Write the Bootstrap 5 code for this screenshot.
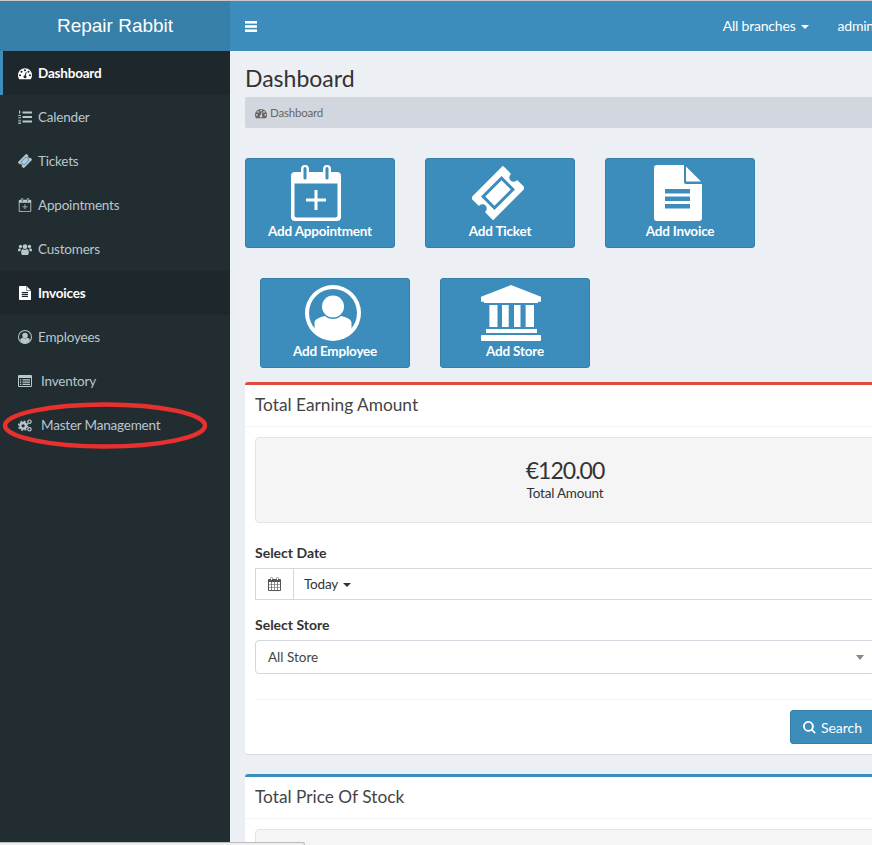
<!DOCTYPE html>
<html lang="en">
<head>
    <meta charset="UTF-8">
    <meta name="viewport" content="width=device-width, initial-scale=1.0">
    <link href="https://cdn.jsdelivr.net/npm/bootstrap@5.3.0/dist/css/bootstrap.min.css" rel="stylesheet">
    <title>Repair Rabbit Dashboard</title>
    <style>
        html, body { height: 845px; overflow: hidden; }
        body { font-family: Lato, "Liberation Sans", sans-serif; font-size: 13.5px; letter-spacing: -.2px; color: #333; background: #ecf0f5; position: relative; }
        .shell { width: 900px; height: 845px; overflow: hidden; border-top: 1px solid #c8c8c8; }
        .glyph { fill: currentColor; flex: none; display: block; }

        .topbar { height: 50px; background: #3c8dbc; color: #fff; }
        .brand-cell { width: 230px; background: #367fa9; font-family: "Liberation Sans", Arial, sans-serif; font-size: 19px; letter-spacing: 0; line-height: 50px; text-align: center; }
        .menu-bars { margin-left: 15px; }
        .top-links { gap: 29px; padding-right: 26px; padding-bottom: 2px; }
        .top-link { color: #fff; font-size: 14px; }
        .top-link:hover { color: #fff; }
        .top-link.dropdown-toggle::after { vertical-align: 2px; margin-left: 5px; border-top-width: 4px; border-right-width: 4px; border-left-width: 4px; }

        .side-menu { width: 230px; background: #222d32; }
        .side-item { height: 44px; padding: 0 5px 0 15px; border-left: 3px solid transparent; color: #b8c7ce; text-decoration: none; gap: 6px; }
        .side-item:hover { color: #b8c7ce; }
        .side-item.picked { background: #1e282c; color: #fff; font-weight: 700; }
        .side-item.marked { border-left-color: #3c8dbc; }
        .side-item.wide-gap { gap: 9px; }

        .page-pane { width: 670px; height: 794px; overflow: hidden; padding: 14px 15px 0; }
        .page-title { font-size: 23px; line-height: 26px; font-weight: 400; letter-spacing: 0; margin: 0 0 6px; }
        .crumbs { background: #d2d6de; border-radius: 2px; font-size: 11.5px; color: #666; height: 31px; padding: 0 10px; margin: 0; gap: 3px; }

        .tile-row { gap: 30px; margin-top: 30px; }
        .tile-row.shifted { padding-left: 15px; }
        .tile { width: 150px; height: 90px; background: #3c8dbc; border: 1px solid #367fa9; border-radius: 3px; color: #fff; padding-top: 6px; font-weight: 700; line-height: 20px; text-decoration: none; }
        .tile:hover { color: #fff; }
        .tile .glyph { height: 56px; }

        .stat-box { border: 0; border-top: 3px solid #3c8dbc; border-radius: 3px; box-shadow: 0 1px 1px rgba(0,0,0,.1); background: #fff; }
        .stat-box.danger { border-top-color: #dd4b39; margin-top: 14px; margin-bottom: 20px; }
        .stat-box .card-header { background: #fff; border-bottom: 1px solid #f4f4f4; padding: 9px 10px 0; height: 42px; }
        .stat-box .card-body { padding: 10px; }
        .box-title { font-size: 17.3px; line-height: 21px; font-weight: 400; letter-spacing: 0; margin: 0; color: #444; }
        .amount-well { height: 86px; padding-top: 19px; background: #f5f5f5; border: 1px solid #e3e3e3; border-radius: 4px; margin-bottom: 20px; }
        .amount-value { font-size: 23px; letter-spacing: -1px; line-height: 26px; color: #333; }
        .amount-note { line-height: 20px; }
        .field-label { font-size: 14px; letter-spacing: 0; font-weight: 700; line-height: 20px; margin-bottom: 5px; display: block; }
        .date-group { height: 32px; margin-bottom: 15px; }
        .date-group .input-group-text { width: 39px; background: #fff; border: 1px solid #d2d6de; border-radius: 0; padding: 0; justify-content: center; color: #555; }
        .date-value { flex: 1; border: 1px solid #d2d6de; border-left: 0; padding: 0 11px; color: #333; }
        .date-value .dropdown-toggle::after { vertical-align: 2px; margin-left: 5px; border-top-width: 4px; border-right-width: 4px; border-left-width: 4px; }
        .store-select { height: 34px; border: 1px solid #d2d6de; border-radius: 4px; font-size: 13.5px; padding: 0 12px; color: #444; background-image: url("data:image/svg+xml,%3Csvg xmlns='http://www.w3.org/2000/svg' viewBox='0 0 8 5'%3E%3Cpath fill='%23888' d='M0 0h8L4 5z'/%3E%3C/svg%3E"); background-position: right 10px center; background-size: 8px 5px; }
        .rule-line { margin: 25px 0 10px; border-top: 1px solid #f4f4f4; opacity: 1; }
        .search-btn { width: 85px; height: 34px; background: #3c8dbc; border: 1px solid #367fa9; border-radius: 3px; color: #fff; font-size: 14px; letter-spacing: 0; gap: 5px; padding: 0; }
        .lower-well { height: 60px; background: #f5f5f5; border: 1px solid #e3e3e3; border-radius: 4px; }

        .ring-note { position: absolute; left: 0; top: 400px; pointer-events: none; }
        .status-tip { position: absolute; left: 0; top: 842px; width: 305px; height: 3px; background: #efefef; border: 1px solid #bbb; border-left: 0; border-bottom: 0; border-top-right-radius: 3px; }
    </style>
</head>
<body>

<svg width="0" height="0" class="position-absolute">
    <symbol id="i-dash" viewBox="0 0 1792 1792"><path d="M384 1184q0-53-37.5-90.5t-90.5-37.5-90.5 37.5-37.5 90.5 37.5 90.5 90.5 37.5 90.5-37.5 37.5-90.5zm192-448q0-53-37.5-90.5t-90.5-37.5-90.5 37.5-37.5 90.5 37.5 90.5 90.5 37.5 90.5-37.5 37.5-90.5zm428 481l101-382q6-26-7.5-48.5t-38.5-29.5-48 6.5-30 39.5l-101 382q-60 5-107 43.5t-63 98.5q-20 77 20 146t117 89 146-20 89-117q16-60-6-117t-72-91zm660-33q0-53-37.5-90.5t-90.5-37.5-90.5 37.5-37.5 90.5 37.5 90.5 90.5 37.5 90.5-37.5 37.5-90.5zm-640-640q0-53-37.5-90.5t-90.5-37.5-90.5 37.5-37.5 90.5 37.5 90.5 90.5 37.5 90.5-37.5 37.5-90.5zm448 192q0-53-37.5-90.5t-90.5-37.5-90.5 37.5-37.5 90.5 37.5 90.5 90.5 37.5 90.5-37.5 37.5-90.5zm320 448q0 261-141 483-19 29-54 29h-1402q-35 0-54-29-141-221-141-483 0-182 71-348t191-286 286-191 348-71 348 71 286 191 191 286 71 348z"/></symbol>
    <symbol id="i-list" viewBox="0 0 14 14"><rect x="4.500" y="1.500" width="9.500" height="2"/><rect x="4.500" y="6" width="9.500" height="2"/><rect x="4.500" y="10.500" width="9.500" height="2"/><rect x="1" y="0.500" width="1.200" height="3.200"/><rect x="0.300" y="5" width="2.600" height="1"/><rect x="0.300" y="7.200" width="2.600" height="1"/><rect x="0.300" y="9.800" width="2.600" height="0.900"/><rect x="0.300" y="11.600" width="2.600" height="0.900"/><rect x="0.300" y="13" width="2.600" height="0.900"/></symbol>
    <symbol id="i-ticket" viewBox="0 0 52 52"><g transform="rotate(-45 26 26)"><path stroke="currentColor" stroke-width="1.500" stroke-linejoin="round" d="M4 11H48V21a5 5 0 0 0 0 10V41H4V31a5 5 0 0 0 0-10Z"/><rect x="13" y="18" width="26" height="16" fill="none" stroke="#3c8dbc" stroke-width="3"/></g></symbol>
    <symbol id="i-cal-plus" viewBox="0 0 50 56"><path fill-rule="evenodd" d="M4 7H10V4a4 4 0 0 1 8 0V7H32V4a4 4 0 0 1 8 0V7H46a4 4 0 0 1 4 4V52a4 4 0 0 1-4 4H4a4 4 0 0 1-4-4V11a4 4 0 0 1 4-4ZM3.500 18.500V50.500a2 2 0 0 0 2 2H44.500a2 2 0 0 0 2-2V18.500ZM12.500 3.500V13a1.500 1.500 0 0 0 3 0V3.500a1.500 1.500 0 0 0-3 0ZM34.500 3.500V13a1.500 1.500 0 0 0 3 0V3.500a1.500 1.500 0 0 0-3 0Z"/><path d="M23.500 25H26.500V33.500H35V36.500H26.500V45H23.500V36.500H15V33.500H23.500Z"/></symbol>
    <symbol id="i-doc" viewBox="0 0 48 56"><path fill-rule="evenodd" d="M3 0H30V17a2 2 0 0 0 2 2H48V53a3 3 0 0 1-3 3H3a3 3 0 0 1-3-3V3a3 3 0 0 1 3-3ZM11 24V28.500H36V24ZM11 31.500V36H36V31.500ZM11 39V43.500H36V39Z"/><path d="M32 1.500 47 16.500H32Z"/></symbol>
    <symbol id="i-person" viewBox="0 0 56 56"><path fill-rule="evenodd" d="M28 0a28 28 0 1 0 0 56a28 28 0 1 0 0-56ZM28 4a24 24 0 1 1 0 48a24 24 0 1 1 0-48Z"/><circle cx="28" cy="21.500" r="11"/><path d="M9.500 44V38C9.500 33.500 15 32.500 20 31C24 35 32 35 36 31C41 32.500 46.500 33.500 46.500 38V44C42 50 35 54 28 54S14 50 9.500 44Z"/></symbol>
    <symbol id="i-bank" viewBox="0 0 60 56"><path d="M30 0 60 11.700V16.700H57V18H3V16.700H0V11.700Z"/><rect x="8.400" y="20" width="8.100" height="22"/><rect x="21" y="20" width="6.700" height="22"/><rect x="33" y="20" width="6.500" height="22"/><rect x="44.600" y="20" width="8.400" height="22"/><rect x="5" y="44" width="51" height="4"/><rect x="0" y="50" width="60" height="6" rx="1"/></symbol>
    <symbol id="i-users" viewBox="0 0 15 12"><circle cx="2.700" cy="2.700" r="1.800"/><circle cx="12.300" cy="2.700" r="1.800"/><circle cx="7.500" cy="3" r="2.500"/><path d="M0 8V6.300C0 5.300.8 5 2 5c.5 0 .9.100 1.200.3C2.700 6 2.600 7 2.700 8ZM15 8V6.300C15 5.300 14.200 5 13 5c-.5 0-.9.100-1.200.3.500.7.600 1.700.5 2.700ZM3.500 10.300V8C3.500 6.500 4.500 5.800 5.300 5.800 6 6.500 9 6.500 9.700 5.800 10.500 5.800 11.500 6.500 11.500 8V10.300C11.500 11.200 10.800 12 10 12H5C4.200 12 3.500 11.200 3.500 10.300Z"/></symbol>
    <symbol id="i-list-alt" viewBox="0 0 14 12"><path fill-rule="evenodd" d="M1 0H13a1 1 0 0 1 1 1V11a1 1 0 0 1-1 1H1a1 1 0 0 1-1-1V1a1 1 0 0 1 1-1ZM1 3V10.700a.3.3 0 0 0 .3.3H12.700a.3.3 0 0 0 .3-.3V3ZM2 4.300V5.500H3.300V4.300ZM4.500 4.300V5.500H12V4.300ZM2 6.500V7.700H3.300V6.500ZM4.500 6.500V7.700H12V6.500ZM2 8.700V9.900H3.300V8.700ZM4.500 8.700V9.900H12V8.700Z"/></symbol>
    <symbol id="i-gears" viewBox="0 0 15 13"><circle cx="5.500" cy="6.800" r="3" fill="none" stroke="currentColor" stroke-width="2.500"/><circle cx="5.500" cy="6.800" r="4.900" fill="none" stroke="currentColor" stroke-width="1.400" stroke-dasharray="2 1.850"/><circle cx="12.300" cy="2.400" r="1.800" fill="none" stroke="currentColor" stroke-width="1.300"/><circle cx="12.300" cy="10.600" r="1.800" fill="none" stroke="currentColor" stroke-width="1.300"/></symbol>
    <symbol id="i-cal" viewBox="0 0 13 14"><path fill-rule="evenodd" d="M1 2H2.500V.500H4.500V2H8.500V.500H10.500V2H12a1 1 0 0 1 1 1V13a1 1 0 0 1-1 1H1a1 1 0 0 1-1-1V3a1 1 0 0 1 1-1ZM1 5V13H12V5ZM3 .9V3H4V.9ZM9 .9V3H10V.9Z"/><path d="M3.300 5H4V13H3.300ZM6.200 5H6.800V13H6.200ZM9 5H9.700V13H9ZM1 7.500H12V8.100H1ZM1 10.200H12V10.800H1Z"/></symbol>
    <symbol id="i-search" viewBox="0 0 14 14"><path d="M5.800 0a5.800 5.800 0 1 0 3.400 10.500l3.200 3.200 1.400-1.400-3.200-3.200A5.800 5.800 0 0 0 5.800 0Zm0 2a3.800 3.800 0 1 1 0 7.600 3.800 3.800 0 0 1 0-7.600Z"/></symbol>
</svg>

<div class="shell d-flex flex-column">
    <nav class="topbar d-flex align-items-center flex-shrink-0">
        <div class="brand-cell">Repair Rabbit</div>
        <svg class="glyph menu-bars" width="12" height="11" viewBox="0 0 12 11" fill="#fff"><rect width="12" height="2.600"/><rect y="4.200" width="12" height="2.600"/><rect y="8.400" width="12" height="2.600"/></svg>
        <div class="top-links d-flex align-items-center ms-auto">
            <a class="top-link dropdown-toggle text-decoration-none" href="#">All branches</a>
            <a class="top-link text-decoration-none" href="#">admin</a>
        </div>
    </nav>

    <div class="d-flex flex-grow-1">
        <aside class="side-menu">
            <a class="side-item picked marked d-flex align-items-center" href="#"><svg class="glyph" width="14" height="14"><use href="#i-dash"/></svg>Dashboard</a>
            <a class="side-item d-flex align-items-center" href="#"><svg class="glyph" width="14" height="14"><use href="#i-list"/></svg>Calender</a>
            <a class="side-item d-flex align-items-center" href="#"><svg class="glyph" width="14" height="14"><use href="#i-ticket"/></svg>Tickets</a>
            <a class="side-item d-flex align-items-center" href="#"><svg class="glyph" width="14" height="14"><use href="#i-cal-plus"/></svg>Appointments</a>
            <a class="side-item d-flex align-items-center" href="#"><svg class="glyph" width="14" height="13"><use href="#i-users"/></svg>Customers</a>
            <a class="side-item picked d-flex align-items-center" href="#"><svg class="glyph" width="14" height="14"><use href="#i-doc"/></svg>Invoices</a>
            <a class="side-item d-flex align-items-center" href="#"><svg class="glyph" width="14" height="14"><use href="#i-person"/></svg>Employees</a>
            <a class="side-item wide-gap d-flex align-items-center" href="#"><svg class="glyph" width="14" height="12"><use href="#i-list-alt"/></svg>Inventory</a>
            <a class="side-item wide-gap d-flex align-items-center" href="#"><svg class="glyph" width="14" height="13"><use href="#i-gears"/></svg>Master Management</a>
        </aside>

        <main class="page-pane">
            <h1 class="page-title">Dashboard</h1>
            <div class="crumbs d-flex align-items-center"><svg class="glyph" width="12" height="12"><use href="#i-dash"/></svg>Dashboard</div>

            <div class="tile-row d-flex">
                <a class="tile d-flex flex-column align-items-center" href="#"><svg class="glyph me-2" width="50"><use href="#i-cal-plus"/></svg>Add Appointment</a>
                <a class="tile d-flex flex-column align-items-center" href="#"><svg class="glyph me-1" width="52"><use href="#i-ticket"/></svg>Add Ticket</a>
                <a class="tile d-flex flex-column align-items-center" href="#"><svg class="glyph me-1" width="48"><use href="#i-doc"/></svg>Add Invoice</a>
            </div>
            <div class="tile-row shifted d-flex">
                <a class="tile d-flex flex-column align-items-center" href="#"><svg class="glyph me-1" width="56"><use href="#i-person"/></svg>Add Employee</a>
                <a class="tile d-flex flex-column align-items-center" href="#"><svg class="glyph me-2" width="60"><use href="#i-bank"/></svg>Add Store</a>
            </div>

            <div class="card stat-box danger">
                <div class="card-header"><h3 class="box-title">Total Earning Amount</h3></div>
                <div class="card-body">
                    <div class="amount-well d-flex flex-column align-items-center">
                        <div class="amount-value">€120.00</div>
                        <div class="amount-note">Total Amount</div>
                    </div>
                    <label class="field-label">Select Date</label>
                    <div class="input-group date-group flex-nowrap">
                        <span class="input-group-text"><svg class="glyph" width="13" height="14"><use href="#i-cal"/></svg></span>
                        <div class="date-value d-flex align-items-center"><span class="dropdown-toggle">Today</span></div>
                    </div>
                    <label class="field-label">Select Store</label>
                    <select class="form-select store-select"><option>All Store</option></select>
                    <hr class="rule-line">
                    <div class="d-flex justify-content-end">
                        <button class="btn search-btn d-flex align-items-center justify-content-center" type="button"><svg class="glyph" width="13" height="13"><use href="#i-search"/></svg>Search</button>
                    </div>
                </div>
            </div>

            <div class="card stat-box">
                <div class="card-header"><h3 class="box-title">Total Price Of Stock</h3></div>
                <div class="card-body"><div class="lower-well"></div></div>
            </div>
        </main>
    </div>
</div>

<svg class="ring-note" width="212" height="52" viewBox="0 0 212 52"><ellipse cx="105" cy="25.500" rx="100" ry="21" fill="none" stroke="#e8312f" stroke-width="4.500"/></svg>
<div class="status-tip"></div>

<script src="https://cdn.jsdelivr.net/npm/bootstrap@5.3.0/dist/js/bootstrap.bundle.min.js"></script>
</body>
</html>
